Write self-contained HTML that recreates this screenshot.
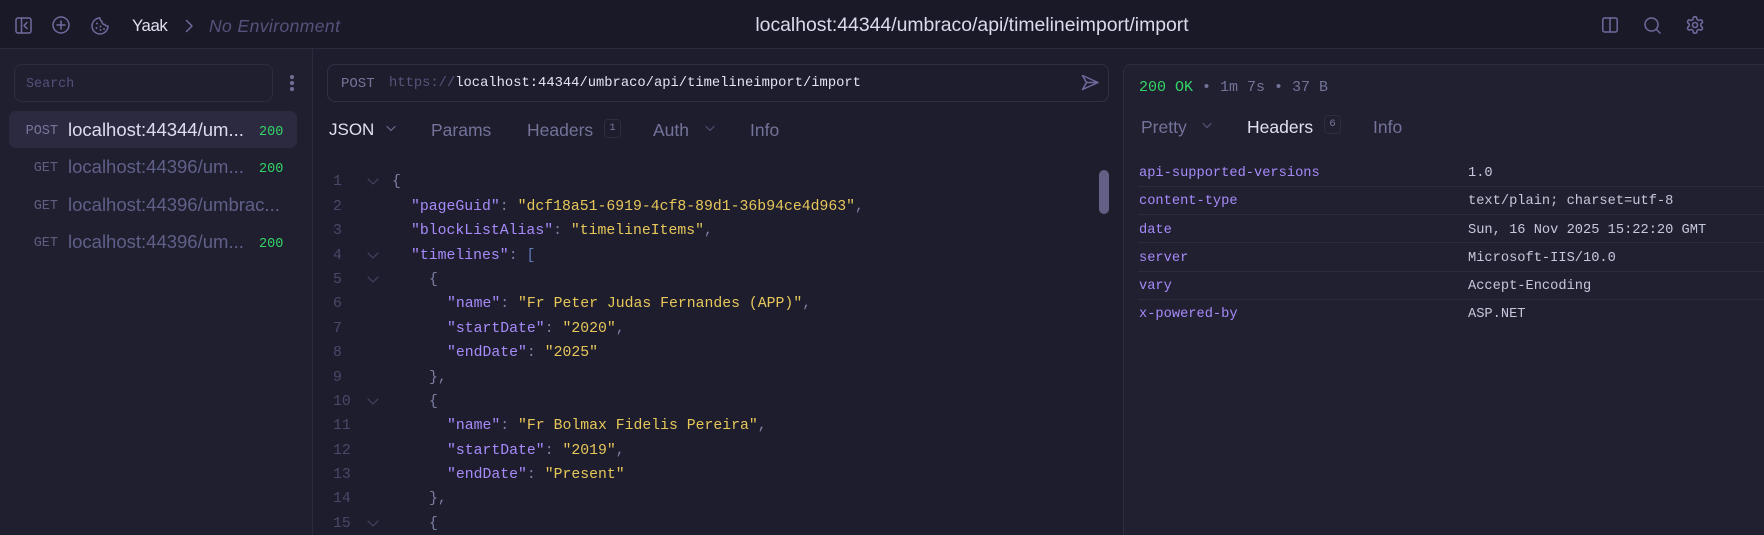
<!DOCTYPE html>
<html><head><meta charset="utf-8"><style>
*{box-sizing:border-box}
html,body{margin:0;padding:0;width:1764px;height:535px;overflow:hidden;background:#1e1d2d}
body{position:relative;font-family:"Liberation Sans",sans-serif}
.a{position:absolute}
.t{position:absolute;white-space:pre;line-height:20px;height:20px}
.m{font-family:"Liberation Mono",monospace}
.c{position:absolute;white-space:pre;height:24px;font:14.8px/24px "Liberation Mono",monospace;color:#7d7fa3}
.n{position:absolute;left:333px;font:14.8px/24px "Liberation Mono",monospace;color:#4a4869}
.k{color:#a78bfa}.s{color:#e6c75a}
svg{position:absolute;fill:none;stroke-linecap:round;stroke-linejoin:round}
.f{width:14px;height:14px;left:366px;stroke:#464466;stroke-width:1.1}
.tab{font-size:17.5px;color:#737399}
.r{position:absolute;left:1138px;right:0;height:1px;background:#2b2a3e}
.hk{left:1139px;font-size:13.7px;color:#a78bfa}
.hv{left:1468px;font-size:13.7px;color:#c5c7dc}
.badge{position:absolute;border:1px solid #2d2c41;border-radius:4px;font:10.5px/17px "Liberation Mono",monospace;color:#77779b;text-align:center}
.me{font-size:13.5px;color:#5f5e80;text-align:right;width:50px;left:8px}
.u{left:68px;font-size:18.5px;color:#5f6088}
.st{left:259px;font-size:13.5px;color:#33d566}
</style></head><body>

<div class="a" style="left:0;top:0;width:1764px;height:49px;background:#1a1927;border-bottom:1px solid #2b2a3e"></div>

<svg style="left:15px;top:17px;stroke:#6f6a9e;stroke-width:1.5" width="17" height="17" viewBox="0 0 17 17"><rect x="1" y="1" width="15" height="15" rx="2"/><path d="M6.500 1v15M12 5.500 9 8.500l3 3"/></svg>
<svg style="left:52px;top:16px;stroke:#6f6a9e;stroke-width:1.5" width="18" height="18" viewBox="0 0 18 18"><circle cx="9" cy="9" r="8"/><path d="M9 5v8M5 9h8"/></svg>
<svg style="left:91px;top:17px;stroke:#6f6a9e;stroke-width:1.5" width="18" height="18" viewBox="0 0 18 18"><path d="M9 1a8 8 0 1 0 8 8c-1.300 .4-2.600-.2-3-1.500-1.700.3-3.300-1.100-3-3C9.700 4.100 8.800 2.500 9 1z"/><path d="M6 6.500h.01M5.500 11h.01M9.500 9.500h.01M9.500 13h.01M13 12h.01" stroke-width="2"/></svg>
<div class="t" style="left:132px;top:16px;font-size:16.800px;letter-spacing:-.4px;color:#dfe1f0">Yaak</div>
<svg style="left:184px;top:19px;stroke:#6f6a9e;stroke-width:1.5" width="10" height="14" viewBox="0 0 10 14"><path d="M2.500 1.500 8 7 2.500 12.500"/></svg>
<div class="t" style="left:209px;top:16px;font-size:17.500px;letter-spacing:.42px;font-style:italic;color:#56527c">No Environment</div>
<div class="t" style="left:672px;top:15px;font-size:19.400px;color:#d9dbec;width:600px;text-align:center">localhost:44344/umbraco/api/timelineimport/import</div>

<svg style="left:1602px;top:17px;stroke:#6f6a9e;stroke-width:1.5" width="16" height="16" viewBox="0 0 16 16"><rect x=".8" y="1" width="14.400" height="14" rx="1.800"/><path d="M8 1v14"/></svg>
<svg style="left:1644px;top:17px;stroke:#6f6a9e;stroke-width:1.5" width="17" height="17" viewBox="0 0 17 17"><circle cx="7.500" cy="7.500" r="6.500"/><path d="m12.500 12.500 3.500 3.500"/></svg>
<svg style="left:1685px;top:15px;stroke:#6f6a9e;stroke-width:1.9" width="20" height="20" viewBox="0 0 24 24"><path d="M12.200 2h-.4a2 2 0 0 0-2 2v.2a2 2 0 0 1-1 1.700l-.4.300a2 2 0 0 1-2 0l-.2-.1a2 2 0 0 0-2.700.7l-.2.400a2 2 0 0 0 .7 2.700l.2.100a2 2 0 0 1 1 1.700v.5a2 2 0 0 1-1 1.700l-.2.100a2 2 0 0 0-.7 2.700l.2.400a2 2 0 0 0 2.700.7l.2-.1a2 2 0 0 1 2 0l.4.300a2 2 0 0 1 1 1.700v.2a2 2 0 0 0 2 2h.4a2 2 0 0 0 2-2v-.2a2 2 0 0 1 1-1.700l.4-.3a2 2 0 0 1 2 0l.2.100a2 2 0 0 0 2.700-.7l.2-.4a2 2 0 0 0-.7-2.700l-.2-.1a2 2 0 0 1-1-1.700v-.5a2 2 0 0 1 1-1.700l.2-.1a2 2 0 0 0 .7-2.700l-.2-.4a2 2 0 0 0-2.700-.7l-.2.100a2 2 0 0 1-2 0l-.4-.3a2 2 0 0 1-1-1.700V4a2 2 0 0 0-2-2z"/><circle cx="12" cy="12" r="3"/></svg>

<div class="a" style="left:0;top:49px;width:313px;height:486px;background:#201f30;border-right:1px solid #2b2a3e"></div>
<div class="a" style="left:14px;top:64px;width:259px;height:38px;border:1px solid #2d2c41;border-radius:8px"></div>
<div class="t m" style="left:26px;top:75px;font-size:13.400px;color:#53507a">Search</div>
<div class="a" style="left:290.200px;top:75.200px;width:3.600px;height:3.600px;border-radius:50%;background:#6f6d92"></div>
<div class="a" style="left:290.200px;top:81.200px;width:3.600px;height:3.600px;border-radius:50%;background:#6f6d92"></div>
<div class="a" style="left:290.200px;top:87.200px;width:3.600px;height:3.600px;border-radius:50%;background:#6f6d92"></div>

<div class="a" style="left:9px;top:111px;width:288px;height:37px;border-radius:7px;background:#2c2a40"></div>
<div class="t m me" style="top:122px;color:#76759a">POST</div>
<div class="t u" style="top:120px;color:#dcdef0">localhost:44344/um...</div>
<div class="t m st" style="top:123px">200</div>
<div class="t m me" style="top:159px">GET</div>
<div class="t u" style="top:157px">localhost:44396/um...</div>
<div class="t m st" style="top:160px">200</div>
<div class="t m me" style="top:197px">GET</div>
<div class="t u" style="top:195px">localhost:44396/umbrac...</div>
<div class="t m me" style="top:234px">GET</div>
<div class="t u" style="top:232px">localhost:44396/um...</div>
<div class="t m st" style="top:235px">200</div>

<div class="a" style="left:327px;top:64px;width:782px;height:38px;border:1px solid #302f45;border-radius:8px"></div>
<div class="t m" style="left:341px;top:74px;font-size:14px;color:#74749a">POST</div>
<div class="t m" style="left:389px;top:74px;font-size:13.800px;color:#55547a">https://<span style="color:#e2e4f3">localhost:44344/umbraco/api/timelineimport/import</span></div>
<svg style="left:1081px;top:74px;stroke:#6f6a9e;stroke-width:1.5" width="18" height="17" viewBox="0 0 18 17"><path d="M1.500 1.500 17 8.500 1.500 15.500 5.500 8.500zM5.500 8.500H17"/></svg>

<div class="t tab" style="left:329px;top:120px;font-size:17px;color:#dfe1f0">JSON</div>
<svg style="left:385px;top:124px;stroke:#6a6a90;stroke-width:1.2" width="12" height="10" viewBox="0 0 12 10"><path d="m2 2.500 4 4 4-4"/></svg>
<div class="t tab" style="left:431px;top:120px">Params</div>
<div class="t tab" style="left:527px;top:120px">Headers</div>
<div class="badge" style="left:604px;top:119px;width:17px;height:19px">1</div>
<div class="t tab" style="left:653px;top:120px">Auth</div>
<svg style="left:704px;top:124px;stroke:#4f4e72;stroke-width:1.2" width="12" height="10" viewBox="0 0 12 10"><path d="m2 2.500 4 4 4-4"/></svg>
<div class="t tab" style="left:750px;top:120px">Info</div>

<div class="n" style="top:170px">1</div><svg class="f" style="top:175px" viewBox="0 0 14 14"><path d="m2 4 5 5 5-5"/></svg><div class="c" style="left:392px;top:170px">{</div>
<div class="n" style="top:195px">2</div><div class="c" style="left:411px;top:195px"><span class="k">"pageGuid"</span>: <span class="s">"dcf18a51-6919-4cf8-89d1-36b94ce4d963"</span>,</div>
<div class="n" style="top:219px">3</div><div class="c" style="left:411px;top:219px"><span class="k">"blockListAlias"</span>: <span class="s">"timelineItems"</span>,</div>
<div class="n" style="top:244px">4</div><svg class="f" style="top:249px" viewBox="0 0 14 14"><path d="m2 4 5 5 5-5"/></svg><div class="c" style="left:411px;top:244px"><span class="k">"timelines"</span>: <span style="color:#5e79b8">[</span></div>
<div class="n" style="top:268px">5</div><svg class="f" style="top:273px" viewBox="0 0 14 14"><path d="m2 4 5 5 5-5"/></svg><div class="c" style="left:429px;top:268px">{</div>
<div class="n" style="top:292px">6</div><div class="c" style="left:447px;top:292px"><span class="k">"name"</span>: <span class="s">"Fr Peter Judas Fernandes (APP)"</span>,</div>
<div class="n" style="top:317px">7</div><div class="c" style="left:447px;top:317px"><span class="k">"startDate"</span>: <span class="s">"2020"</span>,</div>
<div class="n" style="top:341px">8</div><div class="c" style="left:447px;top:341px"><span class="k">"endDate"</span>: <span class="s">"2025"</span></div>
<div class="n" style="top:366px">9</div><div class="c" style="left:429px;top:366px">},</div>
<div class="n" style="top:390px">10</div><svg class="f" style="top:395px" viewBox="0 0 14 14"><path d="m2 4 5 5 5-5"/></svg><div class="c" style="left:429px;top:390px">{</div>
<div class="n" style="top:414px">11</div><div class="c" style="left:447px;top:414px"><span class="k">"name"</span>: <span class="s">"Fr Bolmax Fidelis Pereira"</span>,</div>
<div class="n" style="top:439px">12</div><div class="c" style="left:447px;top:439px"><span class="k">"startDate"</span>: <span class="s">"2019"</span>,</div>
<div class="n" style="top:463px">13</div><div class="c" style="left:447px;top:463px"><span class="k">"endDate"</span>: <span class="s">"Present"</span></div>
<div class="n" style="top:487px">14</div><div class="c" style="left:429px;top:487px">},</div>
<div class="n" style="top:512px">15</div><svg class="f" style="top:517px" viewBox="0 0 14 14"><path d="m2 4 5 5 5-5"/></svg><div class="c" style="left:429px;top:512px">{</div>

<div class="a" style="left:1099px;top:170px;width:10px;height:44px;border-radius:5px;background:#635f85"></div>

<div class="a" style="left:1123px;top:64px;width:660px;height:490px;background:#212031;border:1px solid #2d2c41;border-radius:8px"></div>
<div class="t m" style="left:1139px;top:78px;font-size:15px;color:#727399"><span style="color:#33d566">200 OK</span> • 1m 7s • 37 B</div>
<div class="t tab" style="left:1141px;top:117px">Pretty</div>
<svg style="left:1201px;top:121px;stroke:#56557a;stroke-width:1.2" width="12" height="10" viewBox="0 0 12 10"><path d="m2 2.500 4 4 4-4"/></svg>
<div class="t tab" style="left:1247px;top:117px;color:#dfe1f0">Headers</div>
<div class="badge" style="left:1324px;top:115px;width:17px;height:19px">6</div>
<div class="t tab" style="left:1373px;top:117px">Info</div>

<div class="t m hk" style="top:164px">api-supported-versions</div><div class="t m hv" style="top:164px">1.0</div>
<div class="r" style="top:186px"></div>
<div class="t m hk" style="top:192px">content-type</div><div class="t m hv" style="top:192px">text/plain; charset=utf-8</div>
<div class="r" style="top:214px"></div>
<div class="t m hk" style="top:221px">date</div><div class="t m hv" style="top:221px">Sun, 16 Nov 2025 15:22:20 GMT</div>
<div class="r" style="top:242px"></div>
<div class="t m hk" style="top:249px">server</div><div class="t m hv" style="top:249px">Microsoft-IIS/10.0</div>
<div class="r" style="top:271px"></div>
<div class="t m hk" style="top:277px">vary</div><div class="t m hv" style="top:277px">Accept-Encoding</div>
<div class="r" style="top:299px"></div>
<div class="t m hk" style="top:305px">x-powered-by</div><div class="t m hv" style="top:305px">ASP.NET</div>

</body></html>
